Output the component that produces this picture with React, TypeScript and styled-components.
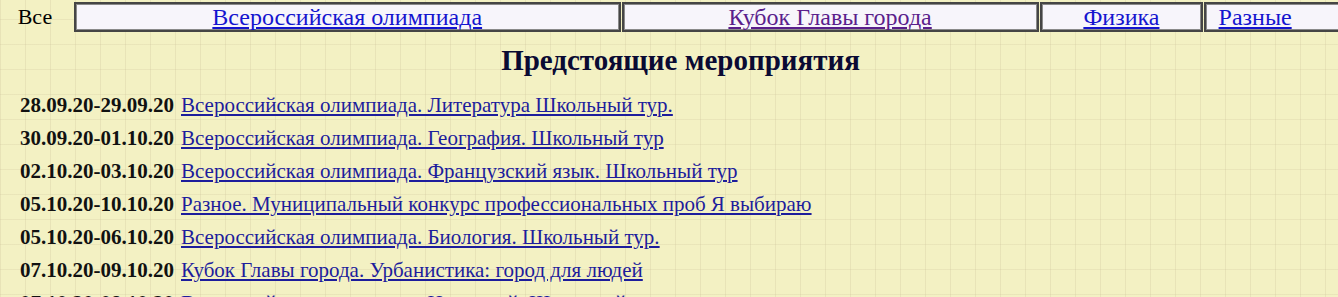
import React from "react";
import styled, {createGlobalStyle} from "styled-components";

const GlobalStyle = createGlobalStyle`
  html, body {
    margin: 0;
    padding: 0;
    overflow: hidden;
  }
  body {
    font-family: "Liberation Serif", "Times New Roman", serif;
    background-color: #f3f1c3;
    background-image:
      repeating-linear-gradient(90deg, rgba(200, 188, 150, 0.26) 0 1px, transparent 1px 25px),
      repeating-linear-gradient(0deg, rgba(200, 188, 150, 0.22) 0 1px, transparent 1px 25px);
    color: #000;
  }
`

const Page = styled.div`
  width: 1350px;
  padding-top: 2px;
`

const Nav = styled.div`
  display: flex;
  align-items: stretch;
  gap: 1px;
  height: 30px;
`

const AllCell = styled.div`
  width: 73px;
  display: flex;
  align-items: center;
  justify-content: center;
  font-size: 22px;
  padding-right: 3px;
  box-sizing: border-box;
`

const NavCell = styled.div<{ $w: number; $pr?: number }>`
  width: ${p => p.$w}px;
  box-sizing: border-box;
  border: 2px solid #454545;
  box-shadow: inset 0 0 0 1px #8a8a8a;
  background: #f7f5fb;
  display: flex;
  align-items: center;
  justify-content: center;
  padding-right: ${p => p.$pr ?? 0}px;
`

const NavLink = styled.a<{ $visited?: boolean }>`
  font-size: 24px;
  line-height: 26px;
  color: ${p => p.$visited ? "#5a1e8c" : "#1414cf"};
  text-decoration: underline;
`

const Title = styled.h2`
  margin: 12px 0 0;
  text-align: center;
  font-size: 29px;
  font-weight: 700;
  color: #0a0a33;
  line-height: 33px;
  padding-left: 11px;
`

const Events = styled.div`
  display: flex;
  flex-direction: column;
  padding: 12px 0 0 20px;
`

const Row = styled.div`
  display: flex;
  align-items: baseline;
  gap: 7px;
  height: 33px;
  line-height: 33px;
`

const Dates = styled.b`
  font-size: 21px;
  font-weight: 700;
  color: #111;
`

const EventLink = styled.a`
  font-size: 21px;
  color: #1d1d9c;
  text-decoration: underline;
`

const events = [
  ["28.09.20-29.09.20", "Всероссийская олимпиада. Литература Школьный тур."],
  ["30.09.20-01.10.20", "Всероссийская олимпиада. География. Школьный тур"],
  ["02.10.20-03.10.20", "Всероссийская олимпиада. Французский язык. Школьный тур"],
  ["05.10.20-10.10.20", "Разное. Муниципальный конкурс профессиональных проб Я выбираю"],
  ["05.10.20-06.10.20", "Всероссийская олимпиада. Биология. Школьный тур."],
  ["07.10.20-09.10.20", "Кубок Главы города. Урбанистика: город для людей"],
  ["07.10.20-08.10.20", "Всероссийская олимпиада. Немецкий. Школьный тур"],
]

function App() {
  return (
    <>
      <GlobalStyle />
      <Page>
        <Nav>
          <AllCell>Все</AllCell>
          <NavCell $w={548}><NavLink href="#">Всероссийская олимпиада</NavLink></NavCell>
          <NavCell $w={418}><NavLink href="#" $visited>Кубок Главы города</NavLink></NavCell>
          <NavCell $w={164}><NavLink href="#">Физика</NavLink></NavCell>
          <NavCell $w={146} $pr={44}><NavLink href="#">Разные</NavLink></NavCell>
        </Nav>
        <Title>Предстоящие мероприятия</Title>
        <Events>
          {events.map(([d, t]) => (
            <Row key={d + t}>
              <Dates>{d}</Dates>
              <EventLink href="#">{t}</EventLink>
            </Row>
          ))}
        </Events>
      </Page>
    </>
  );
}

export default App;
